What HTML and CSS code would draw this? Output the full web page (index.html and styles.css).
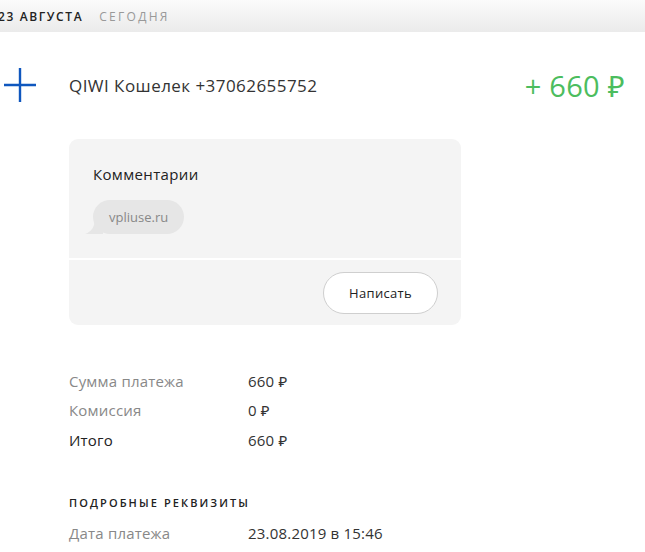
FILE: index.html
```html
<!DOCTYPE html>
<html lang="ru">
<head>
<meta charset="utf-8">
<link rel="stylesheet" href="styles.css">
</head>
<body>
<header class="topbar">
  <span class="date">23 августа</span>
  <span class="today">Сегодня</span>
</header>
<main class="content">
  <section class="head-row">
    <svg class="plus" width="32" height="34" viewBox="0 0 32 34"><path d="M16 0V34M0 17H32" stroke="#0f57be" stroke-width="2.4" fill="none"/></svg>
    <div class="title">QIWI Кошелек +37062655752</div>
    <div class="amount">+ 660 ₽</div>
  </section>
  <section class="card">
    <div class="card-top">
      <div class="card-title">Комментарии</div>
      <div class="bubble">vpliuse.ru</div>
    </div>
    <div class="card-bottom">
      <button class="write">Написать</button>
    </div>
  </section>
  <section class="sums">
    <div class="row"><span class="label">Сумма платежа</span><span class="value">660 ₽</span></div>
    <div class="row"><span class="label">Комиссия</span><span class="value">0 ₽</span></div>
    <div class="row total"><span class="label">Итого</span><span class="value">660 ₽</span></div>
  </section>
  <h3 class="section-title">Подробные реквизиты</h3>
  <div class="row"><span class="label">Дата платежа</span><span class="value">23.08.2019 в 15:46</span></div>
</main>
</body>
</html>
```
FILE: styles.css
```css
html, body { margin: 0; padding: 0; background: #fff; overflow: hidden; }
body { font-family: "Open Sans", "Noto Sans", sans-serif; color: #333; width: 645px; height: 552px; }

.topbar {
  height: 32px;
  background: linear-gradient(#fbfbfb, #ebebeb);
  display: flex;
  align-items: center;
  gap: 16px;
  font-size: 12px;
  letter-spacing: 1.6px;
  text-transform: uppercase;
}
.date { margin-left: -2px; color: #222; font-weight: 600; }
.today { color: #999; letter-spacing: 2.3px; }

.content { padding: 0 20px 0 4px; }

.head-row {
  display: flex;
  align-items: center;
  height: 34px;
  margin-top: 36px;
}
.plus { flex: none; }
.title { margin-left: 33px; font-size: 17px; letter-spacing: 0.45px; color: #333; flex: 1; }
.amount { font-size: 29px; color: #4cbd5e; letter-spacing: 0.3px; }

.card {
  margin: 37px 0 0 65px;
  width: 392px;
  background: #f4f4f4;
  border-radius: 9px;
}
.card-top { padding: 25px 24px 24px 24px; border-bottom: 2px solid #fff; }
.card-title { font-size: 15px; letter-spacing: 0.35px; color: #222; line-height: 20px; }
.bubble {
  position: relative;
  margin-top: 16px;
  display: inline-block;
  background: #e6e6e6;
  border-radius: 17px;
  height: 34px;
  line-height: 34px;
  padding: 0 16px;
  font-size: 13px;
  color: #888;
}
.bubble::before {
  content: "";
  position: absolute;
  left: -8px;
  bottom: 0;
  width: 18px;
  height: 14px;
  background: #e6e6e6;
  clip-path: path("M0 14 C6 12 9 8 10 0 L18 0 L18 14 Z");
}
.card-bottom { display: flex; justify-content: flex-end; padding: 12px 23px 11px 0; }
.write {
  font-family: inherit;
  height: 42px;
  width: 115px;
  border: 1px solid #cfcfcf;
  border-radius: 21px;
  background: #fff;
  font-size: 13px;
  letter-spacing: 0.3px;
  color: #222;
}

.sums { margin: 41px 0 0 65px; }
.row { display: flex; height: 29.5px; align-items: center; font-size: 15px; letter-spacing: 0.2px; }
.content > .row { margin-left: 65px; }
.label { width: 179px; color: #888; }
.value { color: #333; }
.total .label { color: #222; }

.section-title {
  margin: 40px 0 9px 65px;
  font-size: 11px;
  font-weight: 600;
  letter-spacing: 2.1px;
  text-transform: uppercase;
  color: #222;
}
```
